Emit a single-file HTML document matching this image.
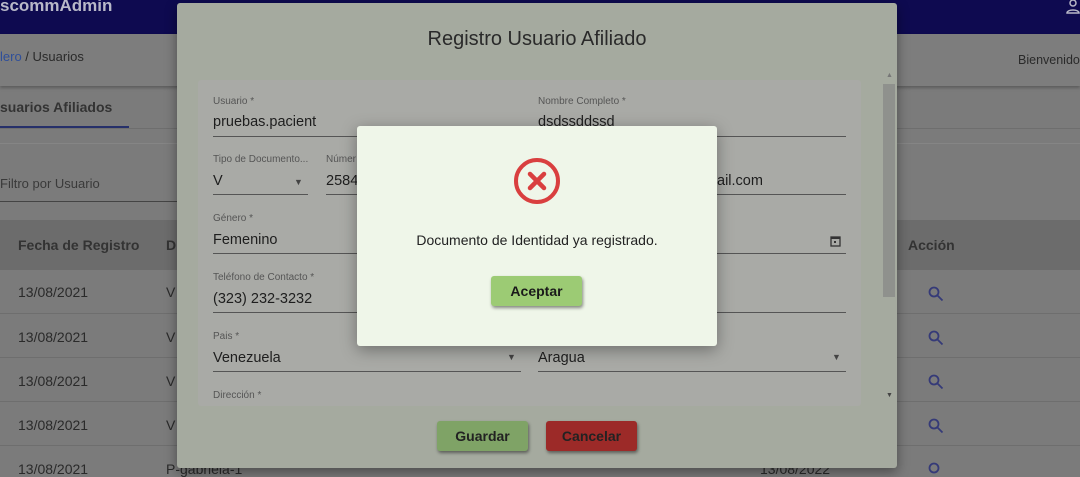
<!DOCTYPE html>
<html><head><meta charset="utf-8"><style>
*{box-sizing:border-box;margin:0;padding:0}
body{width:1080px;height:473px;overflow:hidden;position:relative;background:#7b7b7b;font-family:"Liberation Sans",sans-serif;color:#222}
.abs{position:absolute}
.hdr{left:0;top:0;width:1080px;height:34px;background:#0e0a50;color:#b8b8c8;font-size:17px;font-weight:bold}
.bc{left:0;top:34px;width:1080px;height:52px;background:#7d7d7d;box-shadow:0 2px 3px rgba(0,0,0,.25)}
.t{font-size:14px;color:#2a2a2a}
.row{left:0;width:1080px;height:44px;border-bottom:1px solid #6e6e6e;background:#7b7b7b}
.modal{left:177px;top:3px;width:720px;height:465px;background:#a5aa9f;border-radius:3px;box-shadow:0 4px 12px rgba(0,0,0,.4)}
.card{left:198px;top:80px;width:663px;height:326px;background:#a9aaa6;border-radius:3px}
.lab{font-size:10px;color:#555}
.val{font-size:14.5px;color:#1e1e1e}
.line{height:1px;background:#555}
.btn{border-radius:3px;font-size:14px;text-align:center;line-height:30px;box-shadow:1px 2px 3px rgba(0,0,0,.45);font-weight:bold}
.dlg{left:357px;top:126px;width:360px;height:220px;background:#eff6e9;border-radius:3px;box-shadow:0 4px 16px rgba(0,0,0,.35)}
</style></head><body>
<div class="abs hdr"><span class="abs" style="left:0;top:-4px">scommAdmin</span>
<svg class="abs" style="left:1066px;top:0" width="14" height="14" viewBox="0 0 14 14"><circle cx="7" cy="3" r="3" fill="none" stroke="#b8b8c8" stroke-width="1.5"/><path d="M1 13c0-4 12-4 12 0z" fill="none" stroke="#b8b8c8" stroke-width="1.5"/></svg></div>
<div class="abs bc"></div>
<div class="abs t" style="left:0;top:49px;font-size:13px"><span style="color:#2f4f9a">lero</span> / Usuarios</div>
<div class="abs t" style="left:1018px;top:53px;font-size:12.5px">Bienvenido</div>
<div class="abs t" style="left:0;top:99px;color:#333;font-weight:bold">suarios Afiliados</div>
<div class="abs" style="left:0;top:126px;width:129px;height:2px;background:#26306a"></div>
<div class="abs" style="left:0;top:128px;width:1080px;height:1px;background:#6e6e6e"></div>
<div class="abs" style="left:0;top:143px;width:1080px;height:1px;background:#858585"></div>
<div class="abs t" style="left:0;top:176px;color:#3a3a3a;font-size:13px">Filtro por Usuario</div>
<div class="abs" style="left:0;top:201px;width:180px;height:1px;background:#444"></div>
<div class="abs" style="left:0;top:220px;width:1080px;height:50px;background:#6c6c6c"></div>
<div class="abs t" style="left:18px;top:237px;color:#333;font-weight:bold">Fecha de Registro</div>
<div class="abs t" style="left:166px;top:237px;color:#333;font-weight:bold">D</div>
<div class="abs t" style="left:908px;top:237px;color:#333;font-weight:bold">Acción</div>
<div class="abs row" style="top:270px"></div><div class="abs row" style="top:314px"></div><div class="abs row" style="top:358px"></div><div class="abs row" style="top:402px"></div>
<div class="abs t" style="left:18px;top:284px">13/08/2021</div><div class="abs t" style="left:166px;top:284px">V</div>
<div class="abs t" style="left:18px;top:329px">13/08/2021</div><div class="abs t" style="left:166px;top:329px">V</div>
<div class="abs t" style="left:18px;top:373px">13/08/2021</div><div class="abs t" style="left:166px;top:373px">V</div>
<div class="abs t" style="left:18px;top:417px">13/08/2021</div><div class="abs t" style="left:166px;top:417px">V</div>
<div class="abs t" style="left:18px;top:461px">13/08/2021</div><div class="abs t" style="left:166px;top:461px">P-gabriela-1</div>
<div class="abs t" style="left:760px;top:461px">13/08/2022</div>
<svg class="abs" style="left:927px;top:285px" width="18" height="190" viewBox="0 0 18 190"><g fill="none" stroke="#353a78" stroke-width="1.8"><circle cx="7" cy="7" r="4.5"/><path d="M10.5 10.5l5 5"/><circle cx="7" cy="51" r="4.5"/><path d="M10.5 54.5l5 5"/><circle cx="7" cy="95" r="4.5"/><path d="M10.5 98.5l5 5"/><circle cx="7" cy="139" r="4.5"/><path d="M10.5 142.5l5 5"/><circle cx="7" cy="183" r="4.5"/></g></svg>

<div class="abs modal"></div>
<div class="abs" style="left:177px;top:28px;width:720px;text-align:center;font-size:20px;color:#2a2a2a">Registro Usuario Afiliado</div>
<div class="abs card"></div>
<div class="abs" style="left:883px;top:84px;width:12px;height:213px;background:#8f918d"></div>
<div class="abs" style="left:886px;top:72px;font-size:7px;color:#777">▲</div>
<div class="abs" style="left:886px;top:392px;font-size:7px;color:#444">▼</div>
<div class="abs lab" style="left:213px;top:96px">Usuario *</div>
<div class="abs val" style="left:213px;top:114px">pruebas.pacient</div>
<div class="abs line" style="left:213px;top:136px;width:308px"></div>
<div class="abs lab" style="left:538px;top:96px">Nombre Completo *</div>
<div class="abs val" style="left:538px;top:114px">dsdssddssd</div>
<div class="abs line" style="left:538px;top:136px;width:308px"></div>
<div class="abs lab" style="left:213px;top:154px">Tipo de Documento...</div>
<div class="abs val" style="left:213px;top:173px">V</div>
<div class="abs" style="left:294px;top:177px;font-size:9px;color:#444">▼</div>
<div class="abs line" style="left:213px;top:194px;width:95px"></div>
<div class="abs lab" style="left:326px;top:154px">Númer</div>
<div class="abs val" style="left:326px;top:173px">2584</div>
<div class="abs line" style="left:326px;top:194px;width:40px"></div>
<div class="abs val" style="left:717px;top:173px">ail.com</div>
<div class="abs line" style="left:717px;top:194px;width:129px"></div>
<div class="abs lab" style="left:213px;top:213px">Género *</div>
<div class="abs val" style="left:213px;top:232px">Femenino</div>
<div class="abs line" style="left:213px;top:253px;width:150px"></div>
<div class="abs line" style="left:717px;top:253px;width:129px"></div>
<svg class="abs" style="left:830px;top:235px" width="11" height="12" viewBox="0 0 11 12"><rect x="1" y="2" width="9" height="9" fill="none" stroke="#333" stroke-width="1.3"/><rect x="1" y="2" width="9" height="2" fill="#333"/><rect x="4" y="6" width="2" height="2" fill="#333"/></svg>
<div class="abs lab" style="left:213px;top:272px">Teléfono de Contacto *</div>
<div class="abs val" style="left:213px;top:291px">(323) 232-3232</div>
<div class="abs line" style="left:213px;top:312px;width:150px"></div>
<div class="abs line" style="left:717px;top:312px;width:129px"></div>
<div class="abs lab" style="left:213px;top:331px">Pais *</div>
<div class="abs val" style="left:213px;top:350px">Venezuela</div>
<div class="abs" style="left:507px;top:352px;font-size:9px;color:#444">▼</div>
<div class="abs line" style="left:213px;top:371px;width:308px"></div>
<div class="abs val" style="left:538px;top:350px">Aragua</div>
<div class="abs" style="left:832px;top:352px;font-size:9px;color:#444">▼</div>
<div class="abs line" style="left:538px;top:371px;width:308px"></div>
<div class="abs lab" style="left:213px;top:390px">Dirección *</div>
<div class="abs btn" style="left:437px;top:421px;width:91px;background:#7fa366;color:#222">Guardar</div>
<div class="abs btn" style="left:546px;top:421px;width:91px;background:#9c2a28;color:#222">Cancelar</div>

<div class="abs dlg"></div>
<svg class="abs" style="left:513px;top:157px" width="48" height="48" viewBox="0 0 48 48"><circle cx="24" cy="24" r="21" fill="none" stroke="#d93f3f" stroke-width="4"/><path d="M17 17l14 14M31 17l-14 14" stroke="#d93f3f" stroke-width="4.5" stroke-linecap="round"/></svg>
<div class="abs" style="left:357px;top:232px;width:360px;text-align:center;font-size:14px;color:#222">Documento de Identidad ya registrado.</div>
<div class="abs btn" style="left:491px;top:276px;width:91px;background:#9ccb74;color:#1a1a1a">Aceptar</div>
</body></html>
